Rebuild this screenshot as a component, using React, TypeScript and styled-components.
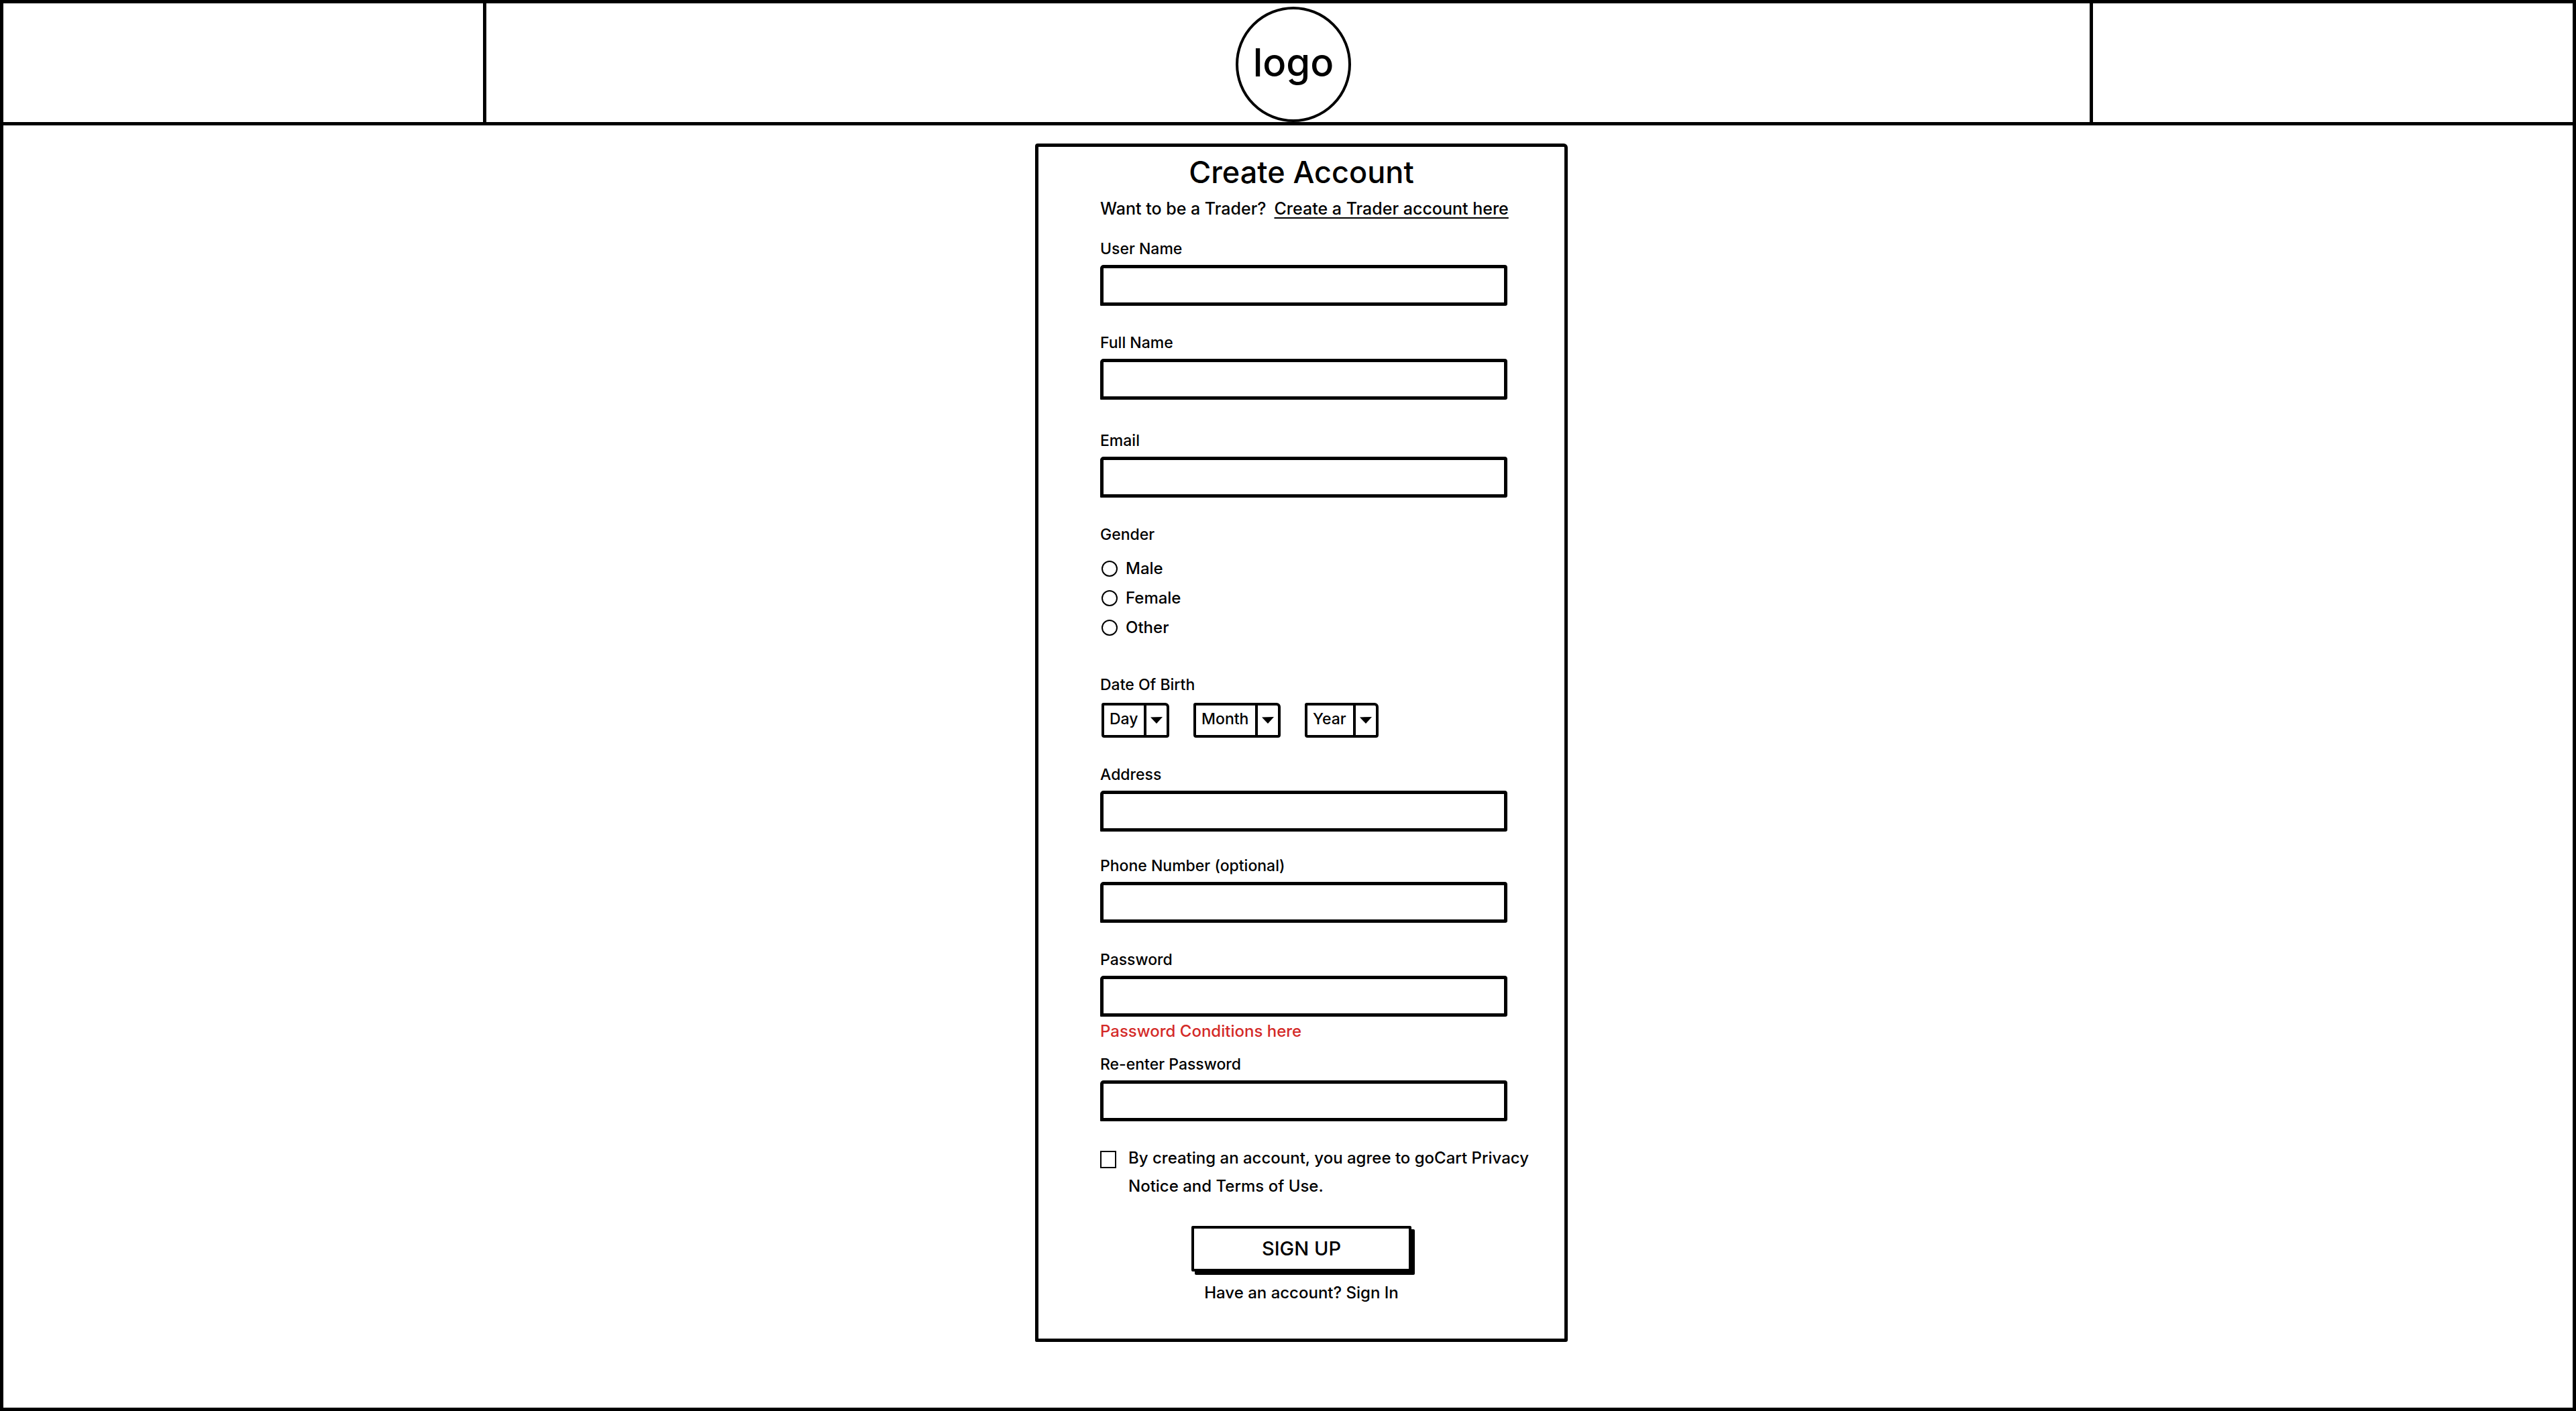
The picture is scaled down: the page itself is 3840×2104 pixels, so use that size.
import React from "react";
import styled, { createGlobalStyle } from "styled-components";

const INK = "#000";
const ERROR = "#d42a28";
const FONT = 'Inter, "Liberation Sans", sans-serif';

const GlobalStyle = createGlobalStyle`
  *, *::before, *::after { box-sizing: border-box; }
  body {
    margin: 0;
    background: #fff;
    color: ${INK};
    font-family: ${FONT};
    font-size: 24px;
    font-weight: 500;
    line-height: 32px;
  }
  input, select, button { font: inherit; color: inherit; }
`;

const Page = styled.div`
  display: flex;
  flex-direction: column;
  min-height: 100vh;
  border: 5px solid ${INK};
`;

const Header = styled.header`
  display: grid;
  grid-template-columns: 18.8% 1fr 18.8%;
  border-bottom: 5px solid ${INK};
`;

const HeaderCell = styled.div`
  display: flex;
  justify-content: center;
  padding: 5px 0 0 16px;

  &:first-child {
    border-right: 5px solid ${INK};
  }

  &:last-child {
    border-left: 5px solid ${INK};
  }
`;

const Logo = styled.a`
  display: flex;
  align-items: center;
  justify-content: center;
  width: 172px;
  height: 172px;
  padding-bottom: 6px;
  border: 4px solid ${INK};
  border-radius: 50%;
  color: inherit;
  font-size: 58px;
  font-weight: 500;
  line-height: 72px;
  text-decoration: none;
`;

const Main = styled.main`
  display: flex;
  justify-content: center;
  padding: 27px 0 40px 40px;
`;

const Card = styled.form`
  display: flex;
  flex-direction: column;
  width: 794px;
  padding: 10px 0 52px;
  border: 5px solid ${INK};
  border-radius: 4px 6px 3px 2px;
`;

const Fields = styled.div`
  display: flex;
  flex-direction: column;
  padding: 0 85px 0 92px;
`;

const Title = styled.h1`
  margin: 0;
  font-size: 45px;
  font-weight: 500;
  line-height: 56px;
  text-align: center;
`;

const Intro = styled.p`
  display: flex;
  gap: 12px;
  margin: 10px 0 0;
  font-size: 25px;
  white-space: nowrap;
`;

const UnderlinedLink = styled.a`
  color: inherit;
  text-decoration: underline;
  text-decoration-thickness: 2px;
  text-underline-offset: 4px;
  text-decoration-skip-ink: none;
`;

const PlainLink = styled.a`
  color: inherit;
  text-decoration: none;
`;

const Field = styled.div<{ $space: number }>`
  display: flex;
  flex-direction: column;
  gap: 8px;
  margin-top: ${(p) => p.$space}px;
`;

const Label = styled.label`
  font-size: 23px;
`;

const TextBox = styled.input`
  width: 100%;
  height: 61px;
  padding: 0 16px;
  border: 5px solid ${INK};
  border-radius: 5px 4px 3px 1px;
  background: transparent;
  outline: none;
`;

const Group = styled.fieldset<{ $space: number }>`
  min-width: 0;
  margin: ${(p) => p.$space}px 0 0;
  padding: 0;
  border: 0;
`;

const Legend = styled.legend`
  padding: 0;
  font-size: 23px;
`;

const RadioList = styled.div`
  display: flex;
  flex-direction: column;
  align-items: flex-start;
  gap: 12px;
  padding: 19px 0 0 2px;
`;

const Choice = styled.label`
  display: flex;
  align-items: center;
  gap: 12px;
`;

const Radio = styled.input`
  appearance: none;
  width: 24px;
  height: 24px;
  margin: 0;
  border: 2px solid ${INK};
  border-radius: 50%;

  &:checked {
    background: radial-gradient(${INK} 45%, transparent 50%);
  }
`;

const DateRow = styled.div`
  display: flex;
  gap: 36px;
  padding: 11px 0 0 2px;
`;

const SelectBox = styled.div<{ $width: number }>`
  display: grid;
  width: ${(p) => p.$width}px;
  height: 52px;
  border: 4px solid ${INK};
  border-radius: 3px 6px 4px 4px;
`;

const Select = styled.select`
  grid-area: 1 / 1;
  appearance: none;
  width: 100%;
  padding: 0 0 4px 8px;
  border: 0;
  background: transparent;
  font-size: 23px;
  outline: none;
`;

const ArrowCell = styled.span`
  grid-area: 1 / 1;
  justify-self: end;
  display: flex;
  align-items: center;
  justify-content: center;
  width: 34px;
  border-left: 4px solid ${INK};
  pointer-events: none;
`;

const Hint = styled.p`
  margin: 6px 0 0;
  color: ${ERROR};
`;

const Agreement = styled.label`
  display: flex;
  align-items: flex-start;
  gap: 18px;
  margin: 34px -70px 0 0;
  line-height: 42px;
`;

const Checkbox = styled.input`
  appearance: none;
  flex: none;
  width: 24px;
  height: 26px;
  margin: 10px 0 0;
  border: 2px solid ${INK};

  &:checked {
    background: ${INK};
    box-shadow: inset 0 0 0 3px #fff;
  }
`;

const SignUpButton = styled.button`
  align-self: center;
  width: 328px;
  height: 68px;
  margin-top: 38px;
  padding: 0;
  border: 4px solid ${INK};
  border-radius: 2px;
  background: #fff;
  box-shadow: 5px 5px 0 ${INK};
  font-size: 29px;
`;

const SignIn = styled.p`
  margin: 16px 0 0;
  text-align: center;
`;

type TextFieldProps = { id: string; label: string; type?: string; space: number };

function TextField({ id, label, type = "text", space }: TextFieldProps) {
  return (
    <Field $space={space}>
      <Label htmlFor={id}>{label}</Label>
      <TextBox id={id} name={id} type={type} />
    </Field>
  );
}

type DropDownProps = { name: string; width: number; options: string[] };

function DropDown({ name, width, options }: DropDownProps) {
  return (
    <SelectBox $width={width}>
      <Select aria-label={name} defaultValue="">
        <option value="">{name}</option>
        {options.map((o) => (
          <option key={o}>{o}</option>
        ))}
      </Select>
      <ArrowCell>
        <svg width="18" height="10" viewBox="0 0 18 10" aria-hidden="true">
          <path d="M0 0.5 L18 0 L9 10 Z" fill={INK} />
        </svg>
      </ArrowCell>
    </SelectBox>
  );
}

const range = (from: number, count: number) =>
  Array.from({ length: count }, (_, i) => String(from + i));

export default function App() {
  return (
    <>
      <GlobalStyle />
      <Page>
        <Header>
          <HeaderCell />
          <HeaderCell>
            <Logo href="#">logo</Logo>
          </HeaderCell>
          <HeaderCell />
        </Header>
        <Main>
          <Card onSubmit={(e) => e.preventDefault()}>
            <Title>Create Account</Title>
            <Fields>
              <Intro>
                Want to be a Trader?
                <UnderlinedLink href="#trader">Create a Trader account here</UnderlinedLink>
              </Intro>
              <TextField id="username" label="User Name" space={28} />
              <TextField id="fullname" label="Full Name" space={39} />
              <TextField id="email" label="Email" type="email" space={45} />
              <Group $space={39}>
                <Legend>Gender</Legend>
                <RadioList>
                  {["Male", "Female", "Other"].map((g) => (
                    <Choice key={g}>
                      <Radio type="radio" name="gender" value={g} />
                      {g}
                    </Choice>
                  ))}
                </RadioList>
              </Group>
              <Group $space={53}>
                <Legend>Date Of Birth</Legend>
                <DateRow>
                  <DropDown name="Day" width={101} options={range(1, 31)} />
                  <DropDown name="Month" width={130} options={range(1, 12)} />
                  <DropDown name="Year" width={110} options={range(1950, 60)} />
                </DateRow>
              </Group>
              <TextField id="address" label="Address" space={39} />
              <TextField id="phone" label="Phone Number (optional)" type="tel" space={35} />
              <TextField id="password" label="Password" type="password" space={39} />
              <Hint>Password Conditions here</Hint>
              <TextField id="confirm" label="Re-enter Password" type="password" space={17} />
              <Agreement>
                <Checkbox type="checkbox" name="agree" />
                <span>By creating an account, you agree to goCart Privacy Notice and Terms of Use.</span>
              </Agreement>
            </Fields>
            <SignUpButton type="submit">SIGN UP</SignUpButton>
            <SignIn>
              Have an account? <PlainLink href="#signin">Sign In</PlainLink>
            </SignIn>
          </Card>
        </Main>
      </Page>
    </>
  );
}
